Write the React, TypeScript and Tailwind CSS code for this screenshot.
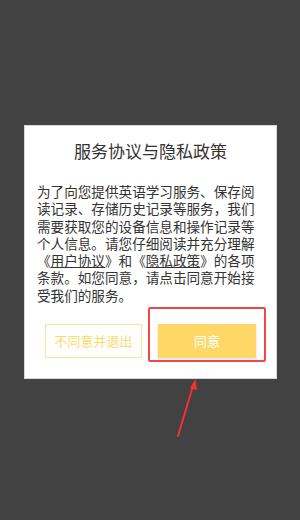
const lines: React.ReactNode[] = [
  '为了向您提供英语学习服务、保存阅',
  '读记录、存储历史记录等服务，我们',
  '需要获取您的设备信息和操作记录等',
  '个人信息。请您仔细阅读并充分理解',
  <>
    《<span className="underline">用户协议</span>》和《<span className="underline">隐私政策</span>》的各项
  </>,
  '条款。如您同意，请点击同意开始接',
  '受我们的服务。',
];

export default function App() {
  return (
    <div
      className="relative w-[300px] h-[520px] bg-[#424242] overflow-hidden pt-[125px]"
      style={{ fontFamily: "'Noto Sans CJK SC', 'Noto Sans', sans-serif" }}
    >
      {/* Dialog card */}
      <div className="ml-[24px] w-[253px] bg-white border border-[#d8d8d8] pt-[12px] pb-[20px]">
        <h2 className="text-center text-[17px] leading-[26px] text-[#333]">服务协议与隐私政策</h2>

        <div className="mt-[19px] ml-[12px] flex flex-col text-[13.6px] text-[#333]">
          {lines.map((l, i) => (
            <div key={i} className="h-[17.3px] leading-[17.3px] whitespace-nowrap">
              {l}
            </div>
          ))}
        </div>

        <div className="mt-[20px] flex gap-[16px] px-[20px]">
          <button className="w-[97px] h-[34px] border border-[#fde49a] text-[#fdd96c] text-[13px]">
            不同意并退出
          </button>
          <button className="w-[98px] h-[34px] bg-[#fed766] text-white text-[13px] shadow-[0_1px_2px_rgba(0,0,0,0.15)]">
            同意
          </button>
        </div>
      </div>

      {/* Annotation highlight */}
      <div className="absolute left-[148px] top-[307px] w-[118px] h-[55px] border-2 border-[#f24646] rounded-[2px]" />

      {/* Annotation arrow */}
      <svg className="absolute left-0 top-0" width="300" height="520" viewBox="0 0 300 520">
        <path d="M178 436 L193 386" stroke="#f53030" strokeWidth="2" strokeLinecap="round" fill="none" />
        <path d="M195.5 379 L190 388 L197 390 Z" fill="#f53030" />
      </svg>
    </div>
  );
}
